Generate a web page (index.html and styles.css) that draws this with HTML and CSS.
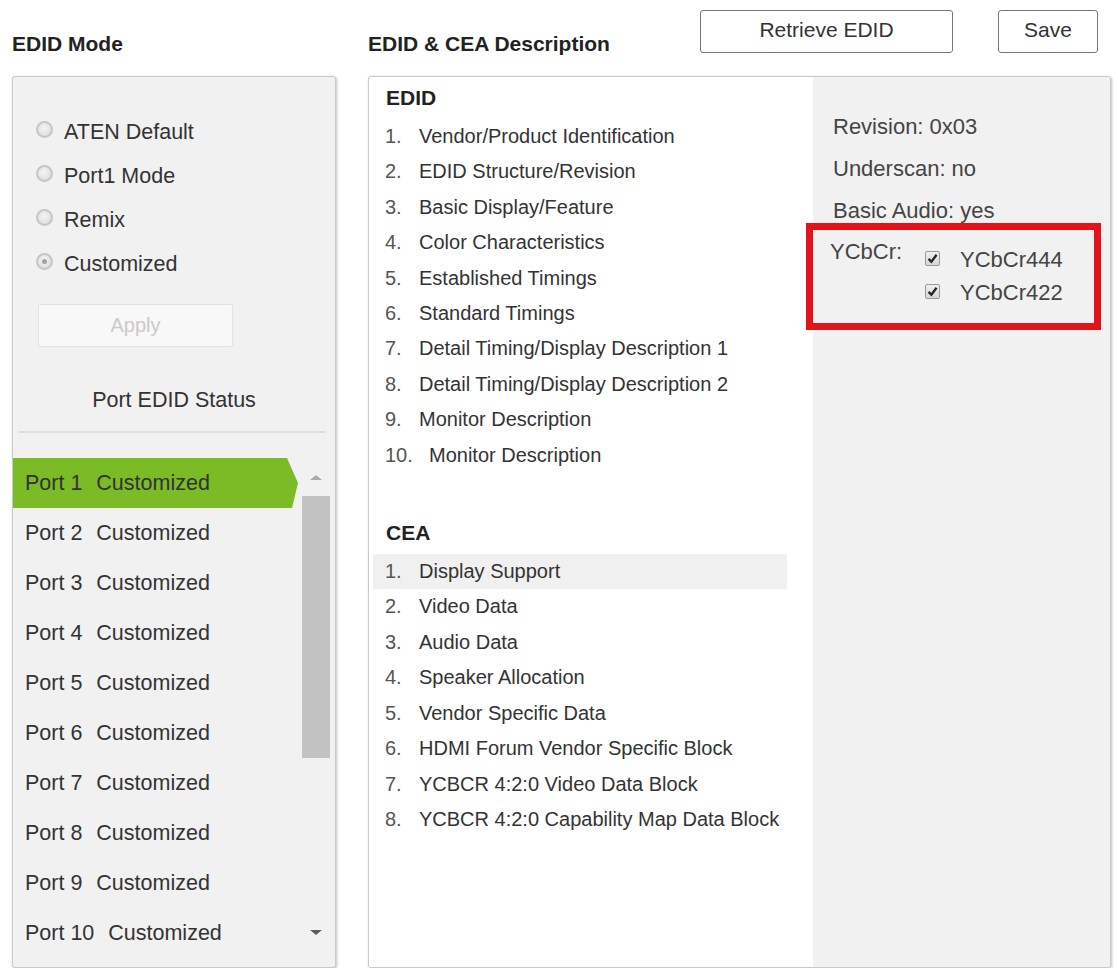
FILE: index.html
```html
<!DOCTYPE html>
<html lang="en">
  <head>
    <meta charset="UTF-8" />
    <meta name="viewport" content="width=device-width, initial-scale=1.0" />
    <title>EDID Settings</title>
    <link rel="stylesheet" href="styles.css">
  </head>
  <body>
    <div class="page">
      <div class="top">
        <h2 class="title mode-title">EDID Mode</h2>
        <div class="desc-head">
          <h2 class="title">EDID &amp; CEA Description</h2>
          <div class="actions">
            <button class="btn retrieve">Retrieve EDID</button>
            <button class="btn save">Save</button>
          </div>
        </div>
      </div>

      <div class="panels">
        <div class="mode-panel">
          <div class="modes">
            <div class="radio-row"><span class="radio"></span>ATEN Default</div>
            <div class="radio-row"><span class="radio"></span>Port1 Mode</div>
            <div class="radio-row"><span class="radio"></span>Remix</div>
            <div class="radio-row"><span class="radio on"></span>Customized</div>
          </div>
          <button class="apply" disabled>Apply</button>
          <p class="status-title">Port EDID Status</p>
          <div class="sep"></div>
          <div class="ports">
            <ul class="port-list">
              <li class="active">Port 1 <span class="state">Customized</span></li>
              <li>Port 2 <span class="state">Customized</span></li>
              <li>Port 3 <span class="state">Customized</span></li>
              <li>Port 4 <span class="state">Customized</span></li>
              <li>Port 5 <span class="state">Customized</span></li>
              <li>Port 6 <span class="state">Customized</span></li>
              <li>Port 7 <span class="state">Customized</span></li>
              <li>Port 8 <span class="state">Customized</span></li>
              <li>Port 9 <span class="state">Customized</span></li>
              <li>Port 10 <span class="state">Customized</span></li>
            </ul>
            <div class="scrollbar">
              <div class="sb-up"></div>
              <div class="sb-thumb"></div>
              <div class="sb-track"></div>
              <div class="sb-down"></div>
            </div>
          </div>
        </div>

        <div class="desc-panel">
          <div class="sections">
            <h3>EDID</h3>
            <ul class="items">
              <li><span class="num">1.</span>Vendor/Product Identification</li>
              <li><span class="num">2.</span>EDID Structure/Revision</li>
              <li><span class="num">3.</span>Basic Display/Feature</li>
              <li><span class="num">4.</span>Color Characteristics</li>
              <li><span class="num">5.</span>Established Timings</li>
              <li><span class="num">6.</span>Standard Timings</li>
              <li><span class="num">7.</span>Detail Timing/Display Description 1</li>
              <li><span class="num">8.</span>Detail Timing/Display Description 2</li>
              <li><span class="num">9.</span>Monitor Description</li>
              <li><span class="num wide">10.</span>Monitor Description</li>
            </ul>
            <h3 class="cea">CEA</h3>
            <ul class="items">
              <li class="selected"><span class="num">1.</span>Display Support</li>
              <li><span class="num">2.</span>Video Data</li>
              <li><span class="num">3.</span>Audio Data</li>
              <li><span class="num">4.</span>Speaker Allocation</li>
              <li><span class="num">5.</span>Vendor Specific Data</li>
              <li><span class="num">6.</span>HDMI Forum Vendor Specific Block</li>
              <li><span class="num">7.</span>YCBCR 4:2:0 Video Data Block</li>
              <li><span class="num">8.</span>YCBCR 4:2:0 Capability Map Data Block</li>
            </ul>
          </div>

          <div class="details">
            <p>Revision: 0x03</p>
            <p>Underscan: no</p>
            <p>Basic Audio: yes</p>
            <div class="ycbcr">
              <span class="ycbcr-label">YCbCr:</span>
              <div class="options">
                <div class="option">
                  <span class="check"><svg width="11" height="11" viewBox="0 0 10 10"><path d="M1.4 5.3 L4 8 L8.7 1.6" fill="none" stroke="#262626" stroke-width="2.1"/></svg></span>
                  <span class="opt-text">YCbCr444</span>
                </div>
                <div class="option">
                  <span class="check"><svg width="11" height="11" viewBox="0 0 10 10"><path d="M1.4 5.3 L4 8 L8.7 1.6" fill="none" stroke="#262626" stroke-width="2.1"/></svg></span>
                  <span class="opt-text">YCbCr422</span>
                </div>
              </div>
            </div>
          </div>
        </div>
      </div>
    </div>
  </body>
</html>
```

FILE: styles.css
```css
body {
  margin: 0;
  background-color: #fff;
  font-family: "Liberation Sans", Arial, sans-serif;
  color: #333;
}
.page {
  padding: 10px 7px 0 12px;
}
.top {
  height: 66px;
  display: flex;
  gap: 32px;
}
.title {
  margin: 0;
  padding-top: 21px;
  font-size: 21px;
  line-height: 26px;
  font-weight: bold;
  color: #222;
}
.mode-title {
  width: 324px;
  flex: none;
}
.desc-head {
  flex: 1;
  display: flex;
}
.actions {
  margin-left: auto;
  margin-right: 13px;
  display: flex;
  gap: 45px;
}
.btn {
  height: 43px;
  border: 1px solid #777;
  border-radius: 3px;
  background-color: #fff;
  font-family: inherit;
  font-size: 21px;
  color: #333;
  padding: 0 0 3px;
}
.retrieve {
  width: 253px;
}
.save {
  width: 100px;
}

.panels {
  display: flex;
  gap: 32px;
}
.mode-panel,
.desc-panel {
  box-sizing: border-box;
  height: 892px;
  border: 1px solid #c9c9c9;
  border-radius: 3px;
  box-shadow: 1px 1px 3px rgba(0, 0, 0, 0.25);
}

/* left column */
.mode-panel {
  width: 324px;
  flex: none;
  background-color: #f1f1f1;
}
.modes {
  padding: 33px 25px 0 23px;
}
.radio-row {
  height: 44px;
  display: flex;
  align-items: center;
  gap: 11px;
  font-size: 21.5px;
}
.radio {
  flex: none;
  box-sizing: border-box;
  width: 17px;
  height: 17px;
  margin-top: -6px;
  border: 2px solid #c6c6c6;
  border-radius: 50%;
  background: radial-gradient(circle at 45% 40%, #f4f4f4, #d8d8d8);
  display: flex;
  align-items: center;
  justify-content: center;
}
.radio.on::after {
  content: "";
  width: 5px;
  height: 5px;
  border-radius: 50%;
  background-color: #a3a3a3;
}
.apply {
  display: block;
  margin: 18px 0 0 25px;
  width: 195px;
  height: 43px;
  border: 1px solid #e2e2e2;
  border-radius: 2px;
  background-color: #f8f8f8;
  font-family: inherit;
  font-size: 20px;
  color: #cacaca;
}
.status-title {
  margin: 40px 0 0;
  text-align: center;
  font-size: 21.5px;
  line-height: 26px;
}
.sep {
  margin: 18px 10px 0 6px;
  height: 2px;
  background-color: #dedede;
}
.ports {
  margin-top: 25px;
  display: flex;
}
.port-list {
  list-style: none;
  margin: 0;
  padding: 0;
  width: 285px;
}
.port-list li {
  height: 50px;
  line-height: 50px;
  padding-left: 12px;
  font-size: 21.5px;
  color: #333;
  white-space: nowrap;
}
.port-list .state {
  margin-left: 8px;
}
.port-list li.active {
  background-color: #7abb26;
  clip-path: polygon(0 0, calc(100% - 11px) 0, 100% 50%, calc(100% - 6px) 100%, 0 100%);
}
.scrollbar {
  width: 28px;
  margin-left: 4px;
  display: flex;
  flex-direction: column;
}
.sb-up,
.sb-down {
  display: flex;
  align-items: center;
  justify-content: center;
}
.sb-up {
  height: 38px;
}
.sb-up::before {
  content: "";
  border-left: 6px solid transparent;
  border-right: 6px solid transparent;
  border-bottom: 5px solid #acacac;
}
.sb-thumb {
  height: 262px;
  background-color: #c2c2c2;
}
.sb-track {
  flex: 1;
}
.sb-down {
  height: 51px;
}
.sb-down::before {
  content: "";
  border-left: 6px solid transparent;
  border-right: 6px solid transparent;
  border-top: 5px solid #5e5e5e;
}

/* right column */
.desc-panel {
  flex: 1;
  display: flex;
  background-color: #fff;
  overflow: hidden;
}
.sections {
  width: 444px;
  flex: none;
  box-sizing: border-box;
  padding: 6px 26px 0 4px;
}
.sections h3 {
  margin: 0;
  padding-left: 13px;
  font-size: 21px;
  line-height: 30px;
  color: #222;
}
.sections h3.cea {
  margin-top: 45px;
}
.items {
  list-style: none;
  margin: 6px 0 0;
  padding: 0;
}
.items li {
  padding-left: 12px;
  font-size: 20px;
  line-height: 35.4px;
  color: #333;
  white-space: nowrap;
}
.items li.selected {
  background-color: #f0f0f0;
}
.num {
  display: inline-block;
  width: 34px;
  color: #555;
}
.num.wide {
  width: 44px;
}
.details {
  flex: 1;
  background-color: #f1f1f1;
  padding: 38px 9px 0 20px;
  font-size: 22px;
  color: #444;
}
.details p {
  margin: 0 0 18px;
  line-height: 24px;
}
.ycbcr {
  margin: -18px 0 0 -27px;
  border: 7px solid #e2141a;
  padding: 10px 0 9px 17px;
  display: flex;
}
.ycbcr-label {
  width: 95px;
  flex: none;
  line-height: 24px;
}
.options {
  margin-top: 8px;
}
.option {
  height: 33px;
  display: flex;
  align-items: flex-start;
}
.check {
  flex: none;
  box-sizing: border-box;
  margin-top: 3px;
  width: 15px;
  height: 15px;
  border: 1px solid #9a9a9a;
  border-radius: 2px;
  background: linear-gradient(#f0f0f0, #d6d6d6);
  display: flex;
  align-items: center;
  justify-content: center;
}
.opt-text {
  margin-left: 20px;
  line-height: 24px;
}
```
